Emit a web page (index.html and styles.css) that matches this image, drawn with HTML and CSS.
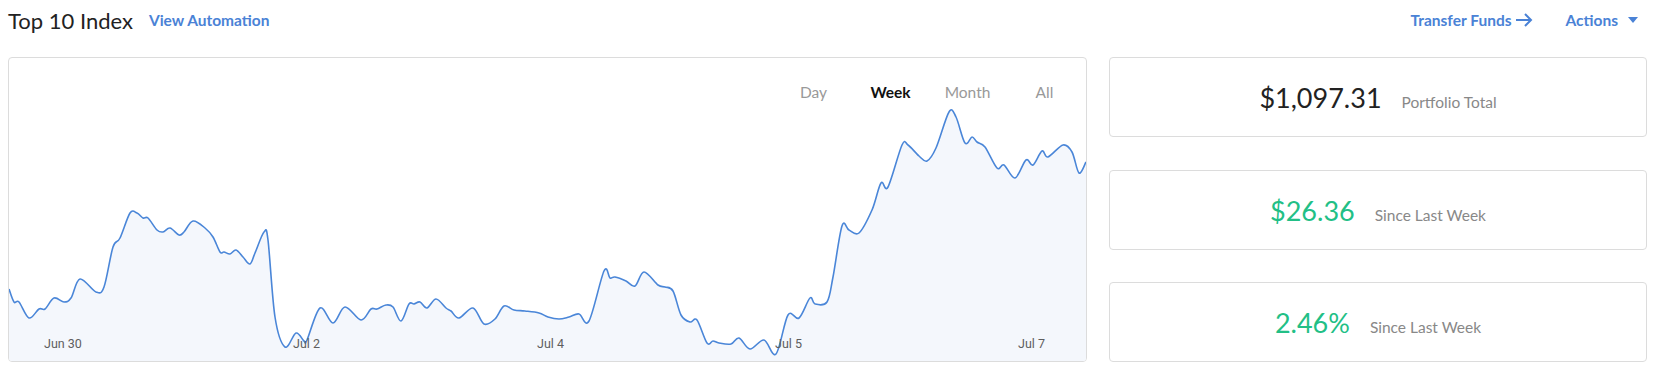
FILE: index.html
```html
<!DOCTYPE html>
<html lang="en">
<head>
    <meta charset="UTF-8">
    <title>Top 10 Index</title>
    <link rel="stylesheet" href="styles.css">
</head>
<body>

<header class="top-bar">
    <div class="title-group">
        <h1>Top 10 Index</h1>
        <a class="link" href="#">View Automation</a>
    </div>
    <div class="header-actions">
        <a class="link" href="#">Transfer Funds
            <svg class="arrow" width="18" height="14" viewBox="0 0 18 14"><path d="M1 7h15M10 1l6 6-6 6" fill="none" stroke="#4a82d6" stroke-width="2"/></svg>
        </a>
        <a class="link" href="#">Actions
            <svg class="caret" width="10" height="6" viewBox="0 0 10 6"><path d="M0 0h10L5 6z" fill="#4a82d6"/></svg>
        </a>
    </div>
</header>

<div class="dashboard">
    <div class="chart-card">
        <svg class="chart" viewBox="0 0 1077 303" preserveAspectRatio="none">
            <path class="area" id="chart-area" d=""/>
            <path class="line" id="chart-line" d=""/>
            <text class="axis" x="35" y="290">Jun 30</text>
            <text class="axis" x="284" y="290">Jul 2</text>
            <text class="axis" x="528" y="290">Jul 4</text>
            <text class="axis" x="766" y="290">Jul 5</text>
            <text class="axis" x="1009" y="290">Jul 7</text>
        </svg>
        <div class="range-tabs">
            <span class="tab">Day</span>
            <span class="tab active">Week</span>
            <span class="tab">Month</span>
            <span class="tab">All</span>
        </div>
    </div>

    <div class="stats">
        <div class="stat-card">
            <span class="stat-value">$1,097.31</span>
            <span class="stat-label">Portfolio Total</span>
        </div>
        <div class="stat-card">
            <span class="stat-value green">$26.36</span>
            <span class="stat-label">Since Last Week</span>
        </div>
        <div class="stat-card">
            <span class="stat-value green">2.46%</span>
            <span class="stat-label">Since Last Week</span>
        </div>
    </div>
</div>

<script src="chart.js"></script>
</body>
</html>
```

FILE: styles.css
```css
* {
    margin: 0;
    padding: 0;
    box-sizing: border-box;
}

body {
    font-family: 'Lato', sans-serif;
    background-color: #fff;
    color: #222;
    padding: 0 13px 0 8px;
}

.top-bar {
    display: flex;
    justify-content: space-between;
    align-items: center;
    height: 40px;
    padding-right: 9px;
}

.title-group {
    display: flex;
    align-items: center;
    gap: 16px;
}

.top-bar h1 {
    font-size: 22px;
    font-weight: 400;
    color: #222;
}

.link {
    color: #4a82d6;
    font-size: 15.5px;
    font-weight: 700;
    text-decoration: none;
    display: flex;
    align-items: center;
    gap: 3px;
}

.header-actions {
    display: flex;
    align-items: center;
    gap: 33px;
}

.caret {
    margin-left: 7px;
}

.dashboard {
    display: grid;
    grid-template-columns: 1079px 1fr;
    gap: 22px;
    margin-top: 17px;
    height: 305px;
}

.chart-card {
    position: relative;
    border: 1px solid #dcdcdc;
    border-radius: 4px;
    overflow: hidden;
}

.chart {
    position: absolute;
    top: 0;
    left: 0;
    width: 100%;
    height: 100%;
}

.chart .area {
    fill: #f4f7fc;
}

.chart .line {
    fill: none;
    stroke: #4a86d8;
    stroke-width: 1.6;
    stroke-linejoin: round;
}

.chart .axis {
    font-family: 'Roboto', sans-serif;
    font-size: 12.5px;
    fill: #5e5e5e;
}

.range-tabs {
    position: absolute;
    top: 25px;
    right: 3px;
    display: flex;
}

.tab {
    width: 77px;
    text-align: center;
    font-size: 15.5px;
    color: #999;
}

.tab.active {
    color: #111;
    font-weight: 700;
}

.stats {
    display: flex;
    flex-direction: column;
    justify-content: space-between;
}

.stat-card {
    height: 80px;
    border: 1px solid #dcdcdc;
    border-radius: 4px;
    display: flex;
    justify-content: center;
    align-items: baseline;
    gap: 20px;
    padding-top: 23px;
}

.stat-value {
    font-size: 27px;
    color: #222;
}

.stat-value.green {
    color: #22bf86;
}

.stat-label {
    font-size: 15.5px;
    color: #888;
}
```

FILE: chart.js
```js
// price history, x/y in chart pixels
const points = [
    [0, 231], [5, 244], [10, 244], [20, 260], [30, 251], [36, 251], [45, 240], [55, 244],
    [62, 240], [71, 221], [87, 234], [95, 229], [104, 189], [111, 180], [121, 155], [128, 155],
    [134, 160], [139, 160], [148, 172], [154, 174], [161, 170], [170, 177], [175, 174], [184, 163],
    [196, 170], [204, 179], [211, 194], [215, 194], [221, 196], [227, 192], [234, 199], [241, 206],
    [246, 195], [255, 174], [259, 182], [266, 259], [276, 289], [287, 275], [295, 283], [298, 282],
    [311, 250], [324, 265], [336, 249], [352, 262], [362, 251], [368, 251], [377, 247], [384, 249],
    [392, 263], [400, 246], [405, 246], [411, 244], [418, 250], [427, 241], [437, 250], [442, 253],
    [450, 260], [464, 250], [475, 266], [486, 261], [495, 248], [505, 252], [516, 253], [530, 255],
    [539, 259], [550, 261], [560, 259], [570, 256], [580, 263], [595, 213], [601, 220], [606, 219],
    [617, 223], [626, 228], [635, 214], [649, 227], [656, 229], [664, 233], [672, 257], [681, 264],
    [688, 262], [698, 285], [704, 283], [710, 285], [722, 286], [730, 280], [741, 291], [755, 282],
    [767, 296], [779, 257], [790, 260], [801, 240], [806, 246], [818, 244], [824, 219], [833, 168],
    [840, 172], [850, 175], [863, 152], [872, 125], [879, 129], [893, 87], [899, 87], [910, 98],
    [918, 103], [927, 90], [940, 54], [947, 59], [956, 85], [963, 79], [968, 84], [976, 89],
    [988, 110], [995, 107], [1006, 120], [1017, 102], [1024, 107], [1033, 93], [1039, 99], [1054, 87],
    [1063, 94], [1070, 115], [1077, 104]
];

// smooth the points with catmull-rom curves
function smoothPath(pts) {
    let d = `M${pts[0][0]} ${pts[0][1]}`;
    for (let i = 0; i < pts.length - 1; i++) {
        const p0 = pts[i - 1] || pts[i];
        const p1 = pts[i];
        const p2 = pts[i + 1];
        const p3 = pts[i + 2] || p2;
        const c1x = p1[0] + (p2[0] - p0[0]) / 6;
        const c1y = p1[1] + (p2[1] - p0[1]) / 6;
        const c2x = p2[0] - (p3[0] - p1[0]) / 6;
        const c2y = p2[1] - (p3[1] - p1[1]) / 6;
        d += ` C${c1x.toFixed(1)} ${c1y.toFixed(1)} ${c2x.toFixed(1)} ${c2y.toFixed(1)} ${p2[0]} ${p2[1]}`;
    }
    return d;
}

const line = smoothPath(points);
document.getElementById('chart-line').setAttribute('d', line);
document.getElementById('chart-area').setAttribute('d', line + ' L1077 303 L0 303 Z');
```
